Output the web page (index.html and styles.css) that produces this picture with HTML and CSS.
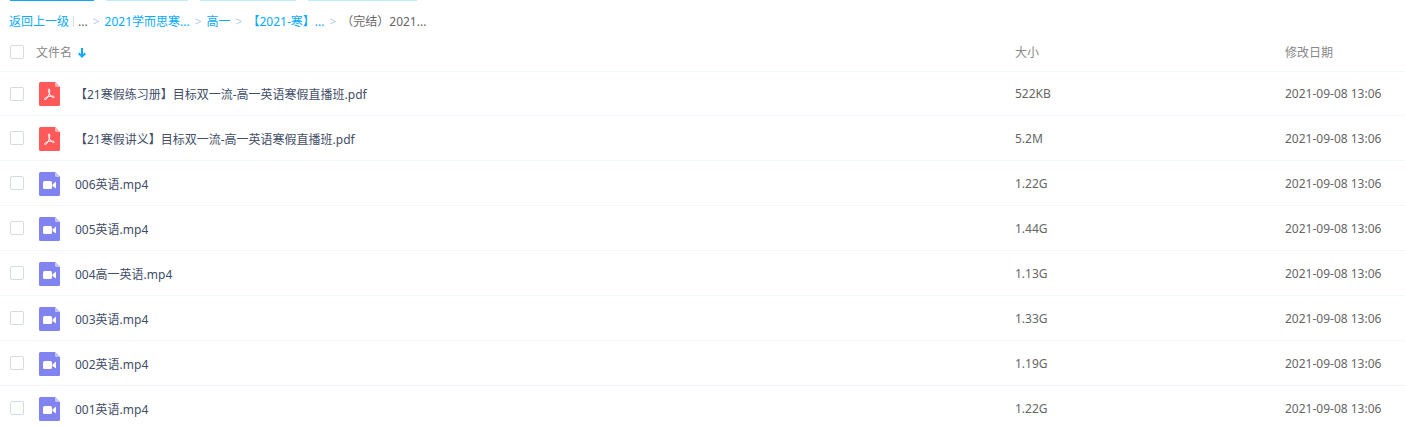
FILE: index.html
```html
<!DOCTYPE html>
<html lang="zh-CN">
<head>
  <meta charset="UTF-8">
  <meta name="viewport" content="width=device-width, initial-scale=1.0">
  <title>文件列表</title>
  <link rel="stylesheet" href="styles.css">
</head>
<body>
  <!-- file type icons -->
  <svg class="icon-defs" width="0" height="0" aria-hidden="true">
    <symbol id="icon-pdf" viewBox="0 0 21 24">
      <path fill="#ff5959" d="M1.5 0H16l5 5v17.5a1.5 1.5 0 0 1-1.5 1.5h-18A1.5 1.5 0 0 1 0 22.5v-21A1.5 1.5 0 0 1 1.5 0z"/>
      <path fill="#ffb5b5" d="M16 0l5 5h-3.5A1.5 1.5 0 0 1 16 3.5z"/>
      <path fill="none" stroke="#fff" stroke-linejoin="round" stroke-linecap="round" d="M10.200 11C9 8.500 9.200 6.800 10 6.800s1 1.700.5 4.200c-.6 2.600-2.600 6.300-4.200 6.600-1.200.1-1-1.200.4-2 2.200-1.200 4.800-1.700 7-1.500 2 .2 2.100 1.600.9 1.600-1.500 0-3.300-2-4.400-4.700z"/>
    </symbol>
    <symbol id="icon-video" viewBox="0 0 21 24">
      <path fill="#8183f1" d="M1.5 0H16l5 5v17.5a1.5 1.5 0 0 1-1.5 1.5h-18A1.5 1.5 0 0 1 0 22.5v-21A1.5 1.5 0 0 1 1.5 0z"/>
      <path fill="#c4c5fa" d="M16 0l5 5h-3.5A1.5 1.5 0 0 1 16 3.5z"/>
      <rect x="4" y="9" width="9" height="8" rx="1.5" fill="#fff"/>
      <path fill="#fff" d="M13.5 12.500L17 9.500v7l-3.500-2.500z"/>
    </symbol>
  </svg>

  <div class="toolbar">
    <span class="tool tool-upload"></span>
    <span class="tool tool-folder"></span>
    <span class="tool tool-offline"></span>
    <span class="tool tool-device"></span>
  </div>

  <nav class="breadcrumb">
    <a href="#">返回上一级</a>
    <span class="divider"></span>
    <span>...</span>
    <span class="sep">&gt;</span>
    <a href="#">2021学而思寒...</a>
    <span class="sep">&gt;</span>
    <a href="#">高一</a>
    <span class="sep">&gt;</span>
    <a href="#">【2021-寒】...</a>
    <span class="sep">&gt;</span>
    <span>（完结）2021...</span>
  </nav>

  <table class="file-table">
    <thead>
      <tr>
        <th class="col-check"><input type="checkbox" aria-label="全选"></th>
        <th class="col-name">文件名
          <svg class="sort" width="8" height="10" viewBox="0 0 8 10" aria-hidden="true"><path d="M4 0v8.500M.7 5.200L4 8.500l3.300-3.300" fill="none" stroke="#09aaff" stroke-width="2"/></svg>
        </th>
        <th class="col-size">大小</th>
        <th class="col-date">修改日期</th>
      </tr>
    </thead>
    <tbody>
      <tr>
        <td><input type="checkbox" id="file1"></td>
        <td><div class="file"><svg class="icon"><use href="#icon-pdf"/></svg><label for="file1">【21寒假练习册】目标双一流-高一英语寒假直播班.pdf</label></div></td>
        <td>522KB</td>
        <td>2021-09-08 13:06</td>
      </tr>
      <tr>
        <td><input type="checkbox" id="file2"></td>
        <td><div class="file"><svg class="icon"><use href="#icon-pdf"/></svg><label for="file2">【21寒假讲义】目标双一流-高一英语寒假直播班.pdf</label></div></td>
        <td>5.2M</td>
        <td>2021-09-08 13:06</td>
      </tr>
      <tr>
        <td><input type="checkbox" id="file3"></td>
        <td><div class="file"><svg class="icon"><use href="#icon-video"/></svg><label for="file3">006英语.mp4</label></div></td>
        <td>1.22G</td>
        <td>2021-09-08 13:06</td>
      </tr>
      <tr>
        <td><input type="checkbox" id="file4"></td>
        <td><div class="file"><svg class="icon"><use href="#icon-video"/></svg><label for="file4">005英语.mp4</label></div></td>
        <td>1.44G</td>
        <td>2021-09-08 13:06</td>
      </tr>
      <tr>
        <td><input type="checkbox" id="file5"></td>
        <td><div class="file"><svg class="icon"><use href="#icon-video"/></svg><label for="file5">004高一英语.mp4</label></div></td>
        <td>1.13G</td>
        <td>2021-09-08 13:06</td>
      </tr>
      <tr>
        <td><input type="checkbox" id="file6"></td>
        <td><div class="file"><svg class="icon"><use href="#icon-video"/></svg><label for="file6">003英语.mp4</label></div></td>
        <td>1.33G</td>
        <td>2021-09-08 13:06</td>
      </tr>
      <tr>
        <td><input type="checkbox" id="file7"></td>
        <td><div class="file"><svg class="icon"><use href="#icon-video"/></svg><label for="file7">002英语.mp4</label></div></td>
        <td>1.19G</td>
        <td>2021-09-08 13:06</td>
      </tr>
      <tr>
        <td><input type="checkbox" id="file8"></td>
        <td><div class="file"><svg class="icon"><use href="#icon-video"/></svg><label for="file8">001英语.mp4</label></div></td>
        <td>1.22G</td>
        <td>2021-09-08 13:06</td>
      </tr>
    </tbody>
  </table>
</body>
</html>
```
FILE: styles.css
```css
body {
  margin: 0;
  font-family: "Noto Sans", "Noto Sans CJK SC", sans-serif;
  font-size: 12px;
  color: #666;
  background-color: #fff;
  overflow: hidden;
}

.icon-defs {
  display: none;
}

.toolbar {
  display: flex;
  gap: 12px;
  padding-left: 10px;
}

.tool {
  height: 1px;
  background-color: #c0e8ff;
}

.tool-upload {
  width: 84px;
  background-color: #09aaff;
}

.tool-folder {
  width: 82px;
}

.tool-offline {
  width: 96px;
}

.tool-device {
  width: 109px;
}

.breadcrumb {
  display: flex;
  align-items: center;
  gap: 5px;
  height: 40px;
  padding-left: 9px;
  white-space: nowrap;
}

.breadcrumb a {
  color: #09aaff;
  text-decoration: none;
}

.breadcrumb .sep {
  color: #b4cbef;
}

.breadcrumb .divider {
  width: 1px;
  height: 11px;
  margin: 0 -1px;
  background-color: #c4e0f4;
}

.file-table {
  width: 100%;
  table-layout: fixed;
  border-collapse: separate;
  border-spacing: 0;
}

.file-table th,
.file-table td {
  box-sizing: border-box;
  height: 45px;
  padding: 0;
  border-bottom: 1px solid #f2f6fd;
  text-align: left;
  vertical-align: middle;
  white-space: nowrap;
}

.file-table th {
  height: 31px;
  padding-bottom: 8px;
  color: #888;
  font-weight: normal;
}

.file-table tbody tr:first-child td {
  height: 44px;
}

.col-check {
  width: 36px;
}

.col-size {
  width: 270px;
}

.col-date {
  width: 120px;
}

.file-table input {
  display: block;
  appearance: none;
  box-sizing: border-box;
  width: 14px;
  height: 14px;
  margin: 0 0 0 10px;
  border: 1px solid #d5dae6;
  border-radius: 2px;
  background-color: #fff;
}

.sort {
  margin-left: 3px;
  vertical-align: -1px;
}

.file {
  display: flex;
  align-items: center;
  gap: 15px;
  padding: 1px 0 0 3px;
}

.icon {
  width: 21px;
  height: 24px;
}

.file label {
  color: #424e67;
}
```
